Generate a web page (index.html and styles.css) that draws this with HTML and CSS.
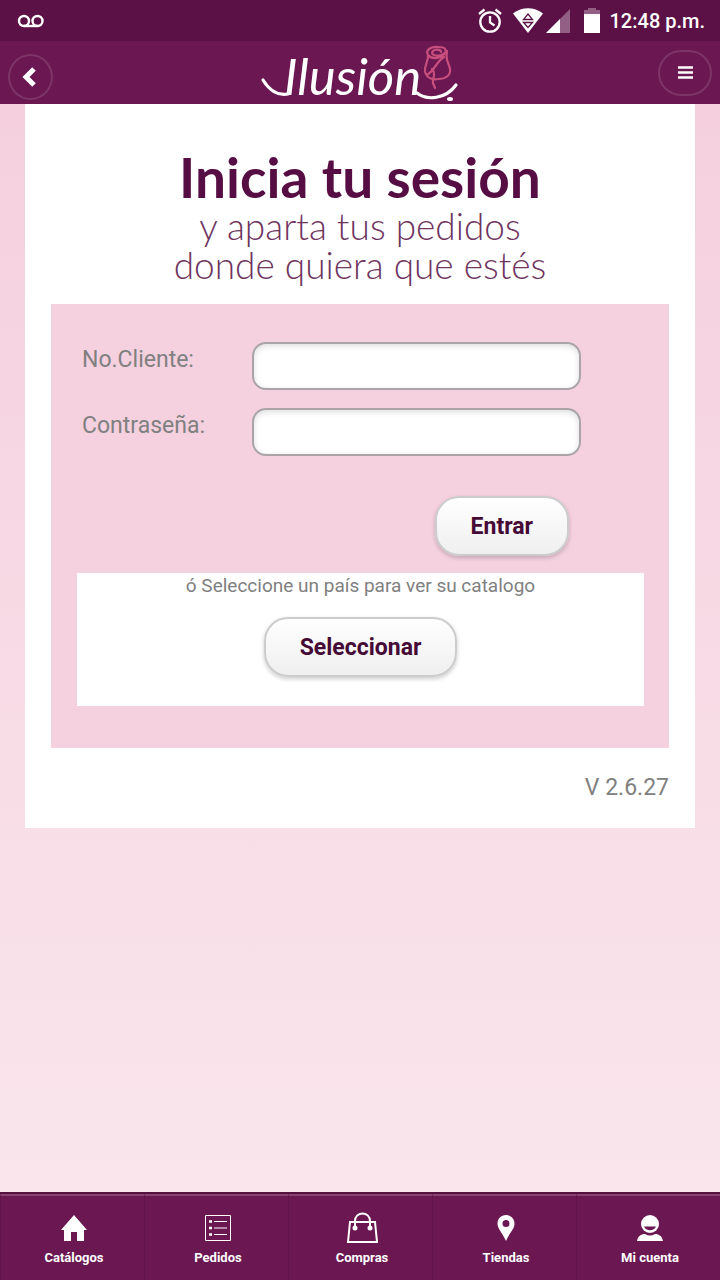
FILE: index.html
```html
<!DOCTYPE html>
<html lang="es">
<head>
<meta charset="utf-8">
<meta name="viewport" content="width=device-width, initial-scale=1">
<title>Ilusión</title>
<link rel="stylesheet" href="styles.css">
</head>
<body>
<div class="app">
  <div class="status">
    <svg class="voicemail" width="28" height="14" viewBox="0 0 28 14" fill="none" stroke="#fff" stroke-width="2.4"><circle cx="7" cy="7" r="5"/><circle cx="20.500" cy="7" r="5"/><path d="M7 12h13.500"/></svg>
    <div class="status-right">
      <svg width="24" height="26" viewBox="0 0 24 26" fill="none" stroke="#fff" stroke-width="2.300"><circle cx="12" cy="14" r="9.700"/><path d="M12 8v6.500l4.500 3M1 6l5.500-4.500M23 6l-5.500-4.500"/></svg>
      <svg class="wifi" width="30" height="25" viewBox="0 0 30 25"><path d="M0 5.500C9-1.500 21-1.500 30 5.500L15 25z" fill="#fff"/><path d="M10.500 11.500h9L15 6zM10.500 14.500h9L15 19.500z" fill="none" stroke="#5b1146" stroke-width="1.300"/></svg>
      <svg class="signal" width="24" height="24" viewBox="0 0 24 24"><path d="M24 0v24H0z" fill="#945f85"/><path d="M14 10v14H0z" fill="#fff"/></svg>
      <svg class="battery" width="16" height="25" viewBox="0 0 16 25"><path d="M4 0h8v2h4v4H0V2h4z" fill="#945f85"/><path d="M0 6h16v19H0z" fill="#fff"/></svg>
      <span>12:48 p.m.</span>
    </div>
  </div>
  <header class="header">
    <button class="back" aria-label="Volver"><svg width="14" height="20" viewBox="0 0 14 20" fill="none" stroke="#fff" stroke-width="5"><path d="M12 2L4 10l8 8"/></svg></button>
    <svg class="logo" width="198" height="62" viewBox="0 0 198 62" role="img" aria-label="Ilusión">
      <g fill="none" stroke="#fff" stroke-width="3.200" stroke-linecap="round">
        <path d="M2 38C8 48 17 54 27 52"/>
        <path d="M156 51c10 8 29 6 39-8"/>
      </g>
      <text class="wordmark" x="23" y="53">Ilusión</text>
      <ellipse cx="189" cy="57" rx="3" ry="2" fill="#fff"/>
      <g fill="none" stroke="#c84f7d" stroke-width="2.200" stroke-linecap="round" stroke-linejoin="round">
        <path d="M167 13c-3-5 3-9 11-8 8 0 9 6 2 8-6 2-11-1-8-4 2-2 8-2 8 1M167 13c4 5 14 4 19-4M167 13c1 6-4 10-3 17 2 6 7 8 13 7 8 0 13-4 12-10-1-6-5-9-3-17M166 33c8-5 9-13 17-18M171 27c5 5 0 9 1 14l2 5"/>
      </g>
    </svg>
    <button class="menu" aria-label="Menú"><svg width="15" height="13" viewBox="0 0 15 13" stroke="#fff" stroke-width="2.400"><path d="M0 1.500h15M0 6.500h15M0 11.500h15"/></svg></button>
  </header>
  <main class="main">
    <section class="card">
      <h1 class="title">Inicia tu sesión</h1>
      <p class="subtitle">y aparta tus pedidos<br>donde quiera que estés</p>
      <form class="login">
        <div class="row"><label for="cliente">No.Cliente:</label><input id="cliente" type="text"></div>
        <div class="row"><label for="clave">Contraseña:</label><input id="clave" type="password"></div>
        <div class="submit"><button class="btn" type="button">Entrar</button></div>
        <div class="country">
          <p>ó Seleccione un país para ver su catalogo</p>
          <button class="btn" type="button">Seleccionar</button>
        </div>
      </form>
      <p class="version">V 2.6.27</p>
    </section>
  </main>
  <nav class="tabs">
    <a href="#catalogos"><svg width="32" height="32" viewBox="0 0 32 32"><path d="M16 3L3 18h3v11h7v-9h6v9h7V18h3z" fill="#fff"/></svg>Catálogos</a>
    <a href="#pedidos"><svg width="32" height="32" viewBox="0 0 32 32" fill="none" stroke="#fff"><path d="M3.500 3.500h25v25h-25z"/><path d="M12 9.500h13M12 16h13M12 22.500h13" stroke-width="1.200"/><path d="M7 9.500h3M7 16h3M7 22.500h3" stroke-width="2.400"/></svg>Pedidos</a>
    <a href="#compras"><svg width="32" height="32" viewBox="0 0 32 32" fill="none" stroke="#fff" stroke-width="2"><path d="M4 10h25l2 20H2zM9 16V9c0-10 15-10 15 0v7"/><circle cx="9" cy="16" r="1.500" fill="#fff"/><circle cx="24" cy="16" r="1.500" fill="#fff"/></svg>Compras</a>
    <a href="#tiendas"><svg width="32" height="32" viewBox="0 0 32 32"><path fill="#fff" fill-rule="evenodd" d="M16 3c-5 0-8.500 4-8.500 8.500C7.500 17 12 20 16 29c4-9 8.500-12 8.500-17.500C24.500 7 21 3 16 3zm0 5a3.500 3.500 0 1 1 0 7 3.500 3.500 0 0 1 0-7z"/></svg>Tiendas</a>
    <a href="#cuenta"><svg width="32" height="32" viewBox="0 0 32 32"><circle cx="16" cy="12" r="9" fill="#fff"/><path d="M10 14.500h12c-2 5-10 5-12 0z" fill="#6a1752"/><path d="M3 29c1-5 4-7 8-7q5 3 10 0c4 0 7 2 8 7z" fill="#fff"/></svg>Mi cuenta</a>
  </nav>
</div>
</body>
</html>
```
FILE: styles.css
```css
* { box-sizing: border-box; }
body { margin: 0; font-family: Roboto, "Liberation Sans", sans-serif; color: #808080; }
p, h1 { margin: 0; }
svg { display: block; flex: none; }
button { font-family: inherit; cursor: pointer; }

.app { display: flex; flex-direction: column; min-height: 100vh; background: linear-gradient(#f5cfde 104px, #fae7ed); }

.status { display: flex; align-items: center; justify-content: space-between; height: 41px; padding: 0 15px 0 17px; background: #5b1146; color: #fff; font-size: 20px; font-weight: 500; }
.status-right { display: flex; align-items: center; }
.wifi { margin-left: 11px; }
.signal { margin-left: 3px; }
.battery { margin: 0 10px 0 14px; }

.header { display: grid; grid-template-columns: 1fr auto 1fr; align-items: center; height: 63px; padding: 0 8px; background: #6a1752; }
.back, .menu { display: flex; align-items: center; justify-content: center; height: 46px; padding: 0; background: transparent; border: 2px solid #7d3466; }
.back { width: 45px; margin-top: 8px; padding-right: 4px; border-radius: 50%; }
.menu { width: 54px; justify-self: end; border-radius: 23px; }
.logo { overflow: visible; }
.wordmark { font: italic 400 51px Lato, sans-serif; fill: #fff; }

.main { flex: 1; padding: 0 25px; }
.card { padding: 44px 26px 24px; background: #fff; }
.title { color: #560d43; font: 700 55px/58px Lato, sans-serif; text-align: center; }
.subtitle { margin-bottom: 20px; color: #6f3460; font: 300 37px/39px Lato, sans-serif; text-align: center; }

.login { padding: 38px 25px 42px 26px; background: #f5d0df; }
.row { display: flex; align-items: flex-start; gap: 16px; margin: 0 63px 18px 5px; font-size: 23px; line-height: 36px; }
.row label { flex: 0 0 154px; }
.row input { flex: 1; min-width: 0; height: 48px; padding: 0 14px; background: #fff; border: 2px solid #aaa4a8; border-radius: 14px; box-shadow: inset 0 2px 6px #ddd; font-size: 23px; font-family: inherit; }
.submit { display: flex; justify-content: flex-end; padding: 22px 75px 17px 0; }
.btn { height: 60px; padding: 0 34px; border: 2px solid #ccc; border-radius: 24px; background: linear-gradient(#fff, #efefef); box-shadow: 0 2px 4px #0003; color: #450a36; font-size: 23px; font-weight: 700; }
.country { display: flex; flex-direction: column; align-items: center; gap: 19px; padding-bottom: 29px; background: #fff; font-size: 19px; line-height: 25px; }
.version { margin-top: 24px; font-size: 23px; line-height: 32px; text-align: right; }

.tabs { display: grid; grid-template-columns: repeat(5, 1fr); height: 88px; border-top: 2px solid #54103f; background: #6a1752; }
.tabs a { display: flex; flex-direction: column; align-items: center; gap: 5px; padding: 16px 0 0 3px; border-top: 2px solid #884271; border-left: 1px solid #611449; color: #fff; font-size: 13px; font-weight: 700; line-height: 18px; text-decoration: none; }
```
